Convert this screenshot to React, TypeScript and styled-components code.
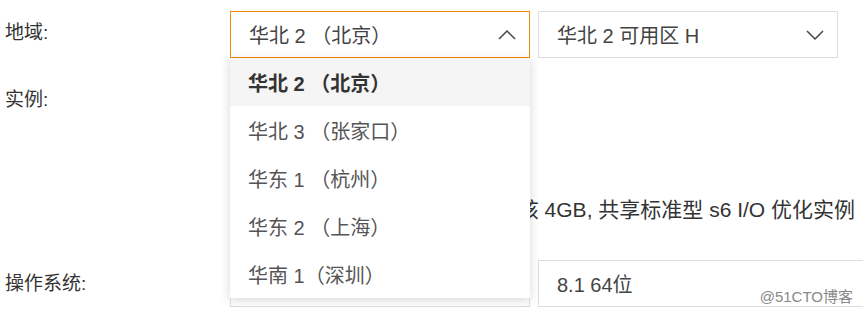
import React from 'react';
import styled, { createGlobalStyle } from 'styled-components';

const GlobalStyle = createGlobalStyle`
    html, body {
        margin: 0;
        padding: 0;
        background: #fff;
    }
    body {
        font-family: "Liberation Sans", "Noto Sans CJK SC", sans-serif;
        color: #333;
        overflow: hidden;
    }
`;

const Page = styled.div`
    position: relative;
    width: 863px;
    height: 315px;
    padding-top: 11px;
    box-sizing: border-box;
    overflow: hidden;
`;

const Row = styled.div<{ $height: number; $gap?: number }>`
    display: flex;
    align-items: flex-start;
    height: ${p => p.$height}px;
    margin-bottom: ${p => p.$gap ?? 0}px;
`;

const Label = styled.div<{ $top: number }>`
    flex-shrink: 0;
    width: 225px;
    padding-left: 5px;
    padding-top: ${p => p.$top}px;
    font-size: 19px;
    line-height: 24px;
    color: #333;
`;

const Controls = styled.div`
    display: flex;
    gap: 8px;
    flex-shrink: 0;
`;

const SelectWrap = styled.div`
    position: relative;
`;

const SelectBox = styled.div<{ $open?: boolean; $width?: number }>`
    flex-shrink: 0;
    width: ${p => p.$width ?? 300}px;
    height: 47px;
    box-sizing: border-box;
    border: 1px solid ${p => (p.$open ? '#f58b00' : '#ddd')};
    display: flex;
    align-items: center;
    justify-content: space-between;
    padding: 0 12px 0 18px;
    font-size: 20px;
    color: #444;
    background: #fff;
`;

const Chevron = ({ up }: { up?: boolean }) => (
    <svg width="20" height="12" viewBox="0 0 20 12" fill="none">
        <path
            d={up ? 'M2 10 L10 2 L18 10' : 'M2 2 L10 10 L18 2'}
            stroke="#444"
            strokeWidth="1.5"
        />
    </svg>
);

const Menu = styled.ul`
    position: absolute;
    top: 47px;
    left: 0;
    width: 300px;
    margin: 0;
    padding: 0;
    list-style: none;
    background: #fff;
    box-shadow: 0 2px 10px rgba(0, 0, 0, 0.16);
    z-index: 10;
`;

const Option = styled.li<{ $active?: boolean }>`
    height: 48px;
    display: flex;
    align-items: center;
    padding-left: 18px;
    font-size: 20px;
    color: ${p => (p.$active ? '#333' : '#555')};
    font-weight: ${p => (p.$active ? 700 : 400)};
    background: ${p => (p.$active ? '#f5f5f5' : '#fff')};
`;

const InstanceArea = styled.div`
    flex-shrink: 0;
    width: 625px;
    padding-top: 110px;
    text-align: right;
    white-space: nowrap;
    font-size: 21px;
    line-height: 24px;
    color: #333;
    overflow: hidden;
`;

const Watermark = styled.div`
    position: absolute;
    right: 10px;
    bottom: 9px;
    font-size: 15px;
    color: #888;
    text-shadow: 0 0 2px #fff;
`;

const regions = ['华北 2 （北京）', '华北 3 （张家口）', '华东 1 （杭州）', '华东 2 （上海）', '华南 1（深圳）'];

const App = () => {
    return (
        <Page>
            <GlobalStyle />
            <Row $height={47} $gap={30}>
                <Label $top={10}>地域:</Label>
                <Controls>
                    <SelectWrap>
                        <SelectBox $open>
                            <span>华北 2 （北京）</span>
                            <Chevron up />
                        </SelectBox>
                        <Menu>
                            {regions.map((r, i) => (
                                <Option key={r} $active={i === 0}>{r}</Option>
                            ))}
                        </Menu>
                    </SelectWrap>
                    <SelectBox>
                        <span>华北 2 可用区 H</span>
                        <Chevron />
                    </SelectBox>
                </Controls>
            </Row>
            <Row $height={172}>
                <Label $top={0}>实例:</Label>
                <InstanceArea>ecs.s6-c1m2.large 2 核 4GB, 共享标准型 s6 I/O 优化实例</InstanceArea>
            </Row>
            <Row $height={47}>
                <Label $top={12}>操作系统:</Label>
                <Controls>
                    <SelectBox />
                    <SelectBox $width={330}>
                        <span>8.1 64位</span>
                    </SelectBox>
                </Controls>
            </Row>
            <Watermark>@51CTO博客</Watermark>
        </Page>
    );
};

export default App;
